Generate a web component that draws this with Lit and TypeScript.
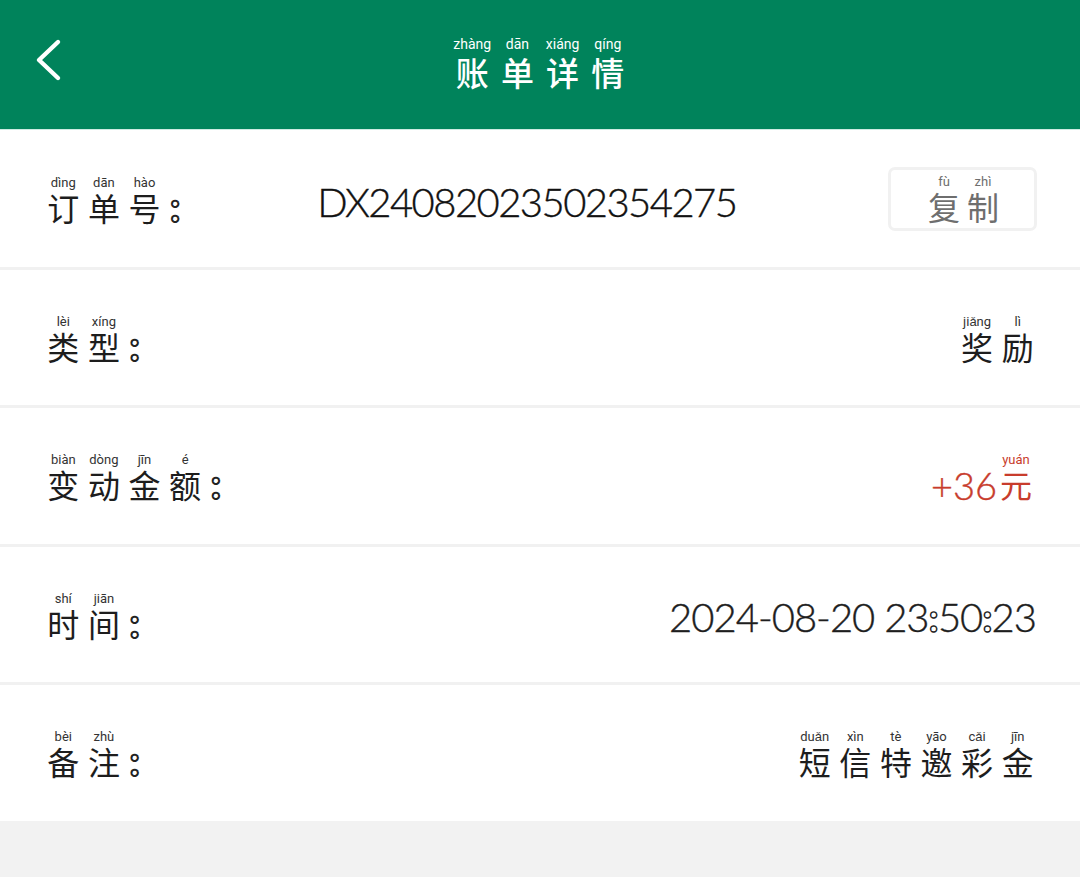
import { LitElement, html, css } from "lit";
import { customElement } from "lit/decorators.js";

type Ch = [string, string];
const chars = (s: string, p: string): Ch[] => {
  const py = p.split(" ");
  return [...s].map((c, i) => [c, py[i]] as Ch);
};

@customElement("app-root")
export class AppRoot extends LitElement {
  static styles = css`
    :host {
      display: block;
      width: 1080px;
      height: 877px;
      background: #f2f2f2;
      overflow: hidden;
      font-family: "Noto Sans CJK SC", sans-serif;
      color: #1d1d1d;
    }
    header {
      height: 129px;
      background: #00835b;
      border-bottom: 1px solid #cdebe2;
      display: grid;
      grid-template-columns: 1fr auto 1fr;
      align-items: center;
      color: #fff;
    }
    .back {
      width: 30px;
      height: 46px;
      margin-left: 33px;
      margin-top: -9px;
      display: block;
    }
    .title {
      margin-top: 1px;
    }
    .title .c {
      width: 45.2px;
    }
    .title .h {
      font-size: 33px;
      font-weight: 500;
      height: 42px;
      line-height: 42px;
    }
    .title .p {
      font-size: 14px;
      color: #fff;
    }
    .row {
      box-sizing: border-box;
      height: 138px;
      background: #fff;
      border-bottom: 3px solid #f1f1f1;
      display: flex;
      align-items: center;
      justify-content: space-between;
      padding: 0 44px 0 43px;
    }
    .row.first {
      height: 140px;
    }
    .row.tall {
      height: 139px;
    }
    .row.last {
      border-bottom: none;
      height: 136px;
    }
    .py {
      display: inline-flex;
      align-items: flex-end;
      white-space: nowrap;
    }
    .c {
      display: inline-flex;
      flex-direction: column;
      align-items: center;
      width: 40.6px;
    }
    .p {
      font-family: Roboto, sans-serif;
      font-size: 13px;
      line-height: 14px;
      height: 14px;
      color: #333;
    }
    .h {
      font-size: 32px;
      font-weight: 400;
      line-height: 34px;
      height: 36px;
    }
    .colon {
      font-family: Lato, sans-serif;
      font-size: 42px;
      line-height: 32px;
      height: 36px;
      font-weight: 700;
      color: #fff;
      -webkit-text-stroke: 2px #222;
      margin-left: 5px;
    }
    .order {
      flex: 1;
      text-align: center;
      padding-right: 15px;
      font-family: Lato, sans-serif;
      font-size: 40px;
      font-weight: 300;
      letter-spacing: -1.55px;
      -webkit-text-stroke: 0.4px #111;
      color: #111;
      transform: translateY(3px);
    }
    .copy {
      box-sizing: border-box;
      width: 149px;
      height: 64px;
      margin-right: -1px;
      border: 3px solid #f1f1f1;
      border-radius: 7px;
      display: flex;
      align-items: center;
      justify-content: center;
      padding-left: 2px;
    }
    .copy .c {
      width: 39px;
    }
    .copy .h {
      color: #6e6e6e;
      line-height: 34px;
      height: 34px;
    }
    .copy .p {
      color: #6e6e6e;
    }
    .label,
    .value {
      transform: translateY(2px);
    }
    .value {
      margin-right: -2px;
    }
    .money {
      color: #c83c2c;
      margin-right: 1px;
    }
    .money .num {
      font-family: Lato, sans-serif;
      font-size: 38px;
      font-weight: 300;
      line-height: 36px;
      height: 36px;
      -webkit-text-stroke: 0.4px #c83c2c;
    }
    .money .c {
      width: 38px;
    }
    .money .p,
    .money .h {
      color: #c83c2c;
    }
    .date {
      font-family: Lato, sans-serif;
      font-size: 40px;
      font-weight: 300;
      letter-spacing: -1px;
      -webkit-text-stroke: 0.4px #222;
      white-space: nowrap;
      transform: translateY(2px);
    }
    .dc {
      font-weight: 700;
      color: #fff;
      -webkit-text-stroke: 1.4px #222;
    }
  `;

  private py(items: Ch[]) {
    return items.map(
      ([c, p]) =>
        html`<span class="c"><span class="p">${p}</span><span class="h">${c}</span></span>`
    );
  }

  private label(s: string, p: string) {
    return html`<div class="py label">
      ${this.py(chars(s, p))}<span class="colon">:</span>
    </div>`;
  }

  render() {
    return html`
      <header>
        <svg class="back" viewBox="0 0 30 46" fill="none" stroke="#fff" stroke-width="4.4" stroke-linecap="round" stroke-linejoin="round">
          <path d="M25 5 L6 23 L25 41" />
        </svg>
        <div class="py title">${this.py(chars("账单详情", "zhàng dān xiáng qíng"))}</div>
        <div></div>
      </header>
      <div class="row first">
        ${this.label("订单号", "dìng dān hào")}
        <div class="order">DX24082023502354275</div>
        <div class="copy"><div class="py">${this.py(chars("复制", "fù zhì"))}</div></div>
      </div>
      <div class="row">
        ${this.label("类型", "lèi xíng")}
        <div class="py value">${this.py(chars("奖励", "jiǎng lì"))}</div>
      </div>
      <div class="row tall">
        ${this.label("变动金额", "biàn dòng jīn é")}
        <div class="py value money">
          <span class="num">+36</span>${this.py(chars("元", "yuán"))}
        </div>
      </div>
      <div class="row">
        ${this.label("时间", "shí jiān")}
        <div class="date">2024-08-20 23<span class="dc">:</span>50<span class="dc">:</span>23</div>
      </div>
      <div class="row last">
        ${this.label("备注", "bèi zhù")}
        <div class="py value">${this.py(chars("短信特邀彩金", "duǎn xìn tè yāo cǎi jīn"))}</div>
      </div>
    `;
  }
}
